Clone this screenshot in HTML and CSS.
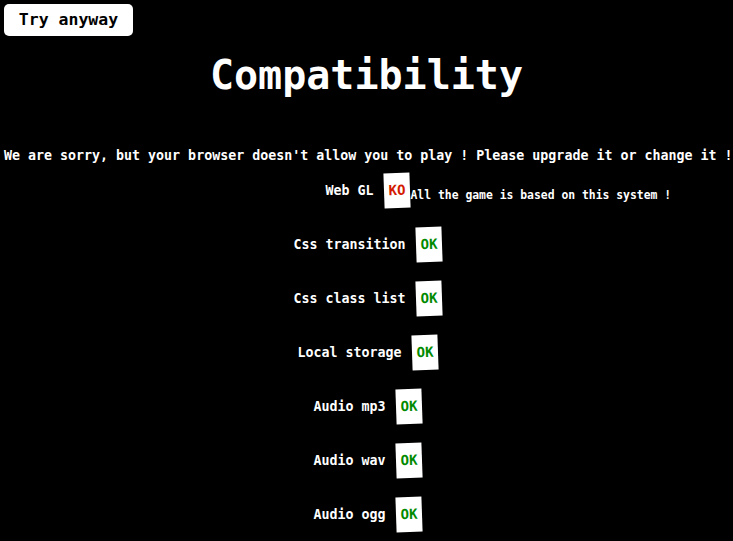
FILE: index.html
```html
<!DOCTYPE html>
<html>
<head>
<meta charset="utf-8">
<link rel="stylesheet" href="styles.css">
</head>
<body>
<button class="try">Try anyway</button>
<h1 class="title">Compatibility</h1>
<p class="sorry">We are sorry, but your browser doesn't allow you to play ! Please upgrade it or change it !</p>
<div class="list">
  <div class="row"><span class="label">Web GL</span><span class="badge-wrap"><span class="badge ko">KO</span><span class="note">All the game is based on this system !</span></span></div>
  <div class="row"><span class="label">Css transition</span><span class="badge-wrap"><span class="badge ok">OK</span></span></div>
  <div class="row"><span class="label">Css class list</span><span class="badge-wrap"><span class="badge ok">OK</span></span></div>
  <div class="row"><span class="label">Local storage</span><span class="badge-wrap"><span class="badge ok">OK</span></span></div>
  <div class="row"><span class="label">Audio mp3</span><span class="badge-wrap"><span class="badge ok">OK</span></span></div>
  <div class="row"><span class="label">Audio wav</span><span class="badge-wrap"><span class="badge ok">OK</span></span></div>
  <div class="row"><span class="label">Audio ogg</span><span class="badge-wrap"><span class="badge ok">OK</span></span></div>
</div>
</body>
</html>
```
FILE: styles.css
```css
html, body {
  margin: 0;
  background: #000;
}
body {
  padding: 4px;
  color: #fff;
  font-family: "DejaVu Sans Mono", "Liberation Mono", monospace;
  font-weight: bold;
  overflow: hidden;
}
.try {
  display: block;
  width: 129px;
  height: 32px;
  padding: 0;
  border: none;
  border-radius: 5px;
  background: #fff;
  color: #000;
  font-family: "DejaVu Sans Mono", monospace;
  font-weight: bold;
  font-size: 16.5px;
  line-height: 32px;
  text-align: center;
}
.title {
  margin: 12px 0 0;
  height: 54px;
  line-height: 54px;
  text-align: center;
  font-size: 40px;
  font-weight: bold;
  font-family: "DejaVu Sans Mono", monospace;
}
.sorry {
  margin: 45px 0 0;
  font-size: 13.3px;
  line-height: 18px;
  text-align: center;
  white-space: nowrap;
}
.list {
  margin-top: -2px;
  display: flex;
  flex-direction: column;
}
.row {
  height: 54px;
  display: flex;
  justify-content: center;
  align-items: center;
  font-size: 13.3px;
  padding-left: 2px;
}
.label {
  margin-right: 10px;
}
.badge-wrap {
  position: relative;
  display: flex;
  align-items: center;
}
.badge {
  display: block;
  width: 26px;
  height: 35px;
  line-height: 35px;
  text-align: center;
  background: #fff;
  font-size: 14px;
  transform: rotate(-2deg);
}
.ko { color: #d41a00; }
.ok { color: #008a00; }
.note {
  position: absolute;
  left: 27px;
  top: 15px;
  white-space: nowrap;
  font-size: 11.4px;
  color: #fff;
}
```
